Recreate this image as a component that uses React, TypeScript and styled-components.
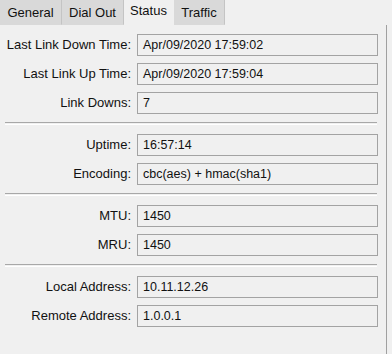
import React from 'react';
import styled, { createGlobalStyle } from 'styled-components';

const GlobalStyle = createGlobalStyle`
  html, body {
    margin: 0;
    padding: 0;
    background: #f0f0f0;
  }
  body {
    font-family: "Liberation Sans", Arial, sans-serif;
    font-size: 12px;
    color: #111;
  }
`;

const Window = styled.div`
  width: 392px;
  height: 354px;
  background: #f0f0f0;
  display: flex;
  flex-direction: column;
  overflow: hidden;
`;

const TabBar = styled.div`
  display: flex;
  height: 25px;
  flex-shrink: 0;
`;

const Tab = styled.div<{ $active?: boolean; $width: number }>`
  width: ${(p) => p.$width}px;
  box-sizing: border-box;
  display: flex;
  align-items: center;
  justify-content: center;
  font-size: 13px;
  background: ${(p) => (p.$active ? '#f0f0f0' : '#d9d9d9')};
  border-right: 1px solid ${(p) => (p.$active ? '#f0f0f0' : '#c4c4c4')};
  border-bottom: 1px solid ${(p) => (p.$active ? '#f0f0f0' : '#d9d9d9')};
  padding-bottom: ${(p) => (p.$active ? 3 : 0)}px;
`;

const Pane = styled.div`
  flex: 1;
  width: 387px;
  box-sizing: border-box;
  border-right: 1px solid #a0a0a0;
  padding: 9px 0 0 0;
  display: flex;
  flex-direction: column;
`;

const Group = styled.div`
  display: grid;
  grid-template-columns: 131px 241px;
  column-gap: 6px;
  row-gap: 7px;
`;

const Label = styled.div`
  text-align: right;
  line-height: 22px;
  height: 22px;
  white-space: nowrap;
  font-size: 13px;
`;

const Field = styled.div`
  height: 22px;
  box-sizing: border-box;
  border: 1px solid #a3a3a3;
  background: #f0f0f0;
  padding-left: 5px;
  line-height: 20px;
  white-space: nowrap;
  font-size: 12.5px;
`;

const Separator = styled.div`
  margin: 8px 9px 9px 5px;
  height: 1px;
  border-top: 1px solid #a8a8a8;
  border-bottom: 1px solid #ffffff;
`;

type Row = [string, string];

const groups: Row[][] = [
  [
    ['Last Link Down Time:', 'Apr/09/2020 17:59:02'],
    ['Last Link Up Time:', 'Apr/09/2020 17:59:04'],
    ['Link Downs:', '7'],
  ],
  [
    ['Uptime:', '16:57:14'],
    ['Encoding:', 'cbc(aes) + hmac(sha1)'],
  ],
  [
    ['MTU:', '1450'],
    ['MRU:', '1450'],
  ],
  [
    ['Local Address:', '10.11.12.26'],
    ['Remote Address:', '1.0.0.1'],
  ],
];

const tabs = [
  { name: 'General', width: 62 },
  { name: 'Dial Out', width: 62 },
  { name: 'Status', width: 50, active: true },
  { name: 'Traffic', width: 51 },
];

export default function App() {
  return (
    <>
      <GlobalStyle />
      <Window>
        <TabBar>
          {tabs.map((t) => (
            <Tab key={t.name} $width={t.width} $active={t.active}>
              {t.name}
            </Tab>
          ))}
        </TabBar>
        <Pane>
          {groups.map((g, i) => (
            <React.Fragment key={i}>
              {i > 0 && <Separator />}
              <Group>
                {g.map(([label, value]) => (
                  <React.Fragment key={label}>
                    <Label>{label}</Label>
                    <Field>{value}</Field>
                  </React.Fragment>
                ))}
              </Group>
            </React.Fragment>
          ))}
        </Pane>
      </Window>
    </>
  );
}
